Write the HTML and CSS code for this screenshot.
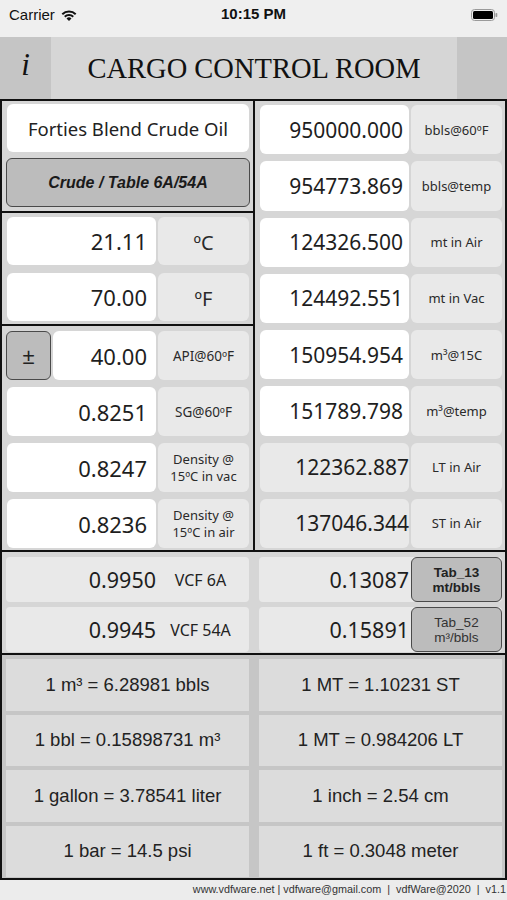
FILE: index.html
```html
<!DOCTYPE html>
<html lang="en">
<head>
  <meta charset="UTF-8">
  <meta name="viewport" content="width=device-width, initial-scale=1">
  <title>Cargo Control Room</title>
  <link rel="stylesheet" href="styles.css">
</head>
<body>
  <!-- iOS status bar -->
  <div class="status">
    <span class="carrier">Carrier
      <svg class="wifi" width="18" height="13" viewBox="0 0 18 13">
        <path d="M9 13 L6.53 10.53 A3.5 3.5 0 0 1 11.47 10.53 Z"/>
        <path d="M4.05 8.05 A7 7 0 0 1 13.95 8.05 L12.54 9.46 A5 5 0 0 0 5.46 9.46 Z"/>
        <path d="M1.58 5.58 A10.5 10.5 0 0 1 16.42 5.58 L15.01 6.99 A8.5 8.5 0 0 0 2.99 6.99 Z"/>
      </svg>
    </span>
    <span class="clock">10:15 PM</span>
    <svg class="battery" width="27" height="12" viewBox="0 0 27 12">
      <rect x="0.5" y="0.5" width="23" height="11" rx="3" fill="none" stroke="#9a9a9a"/>
      <rect x="2" y="2" width="20" height="8" rx="1.5" fill="#000"/>
      <rect x="24.5" y="4" width="1.8" height="4" rx="0.8" fill="#9a9a9a"/>
    </svg>
  </div>

  <header class="titlebar">
    <div class="info">i</div>
    <h1 class="title">CARGO CONTROL ROOM</h1>
    <div class="side"></div>
  </header>

  <main class="board">
    <section class="top">
      <div class="col-left">
        <div class="group group-oil">
          <div class="box name">Forties Blend Crude Oil</div>
          <button class="btn table-btn">Crude / Table 6A/54A</button>
        </div>

        <div class="group group-temp">
          <div class="row"><div class="box val">21.11</div><div class="label unit">ºC</div></div>
          <div class="row"><div class="box val">70.00</div><div class="label unit">ºF</div></div>
        </div>

        <div class="group group-dens">
          <div class="row">
            <div class="api">
              <button class="btn sign">±</button>
              <div class="box val">40.00</div>
            </div>
            <div class="label">API@60ºF</div>
          </div>
          <div class="row"><div class="box val">0.8251</div><div class="label">SG@60ºF</div></div>
          <div class="row"><div class="box val">0.8247</div><div class="label two">Density @<br>15ºC in vac</div></div>
          <div class="row"><div class="box val">0.8236</div><div class="label two">Density @<br>15ºC in air</div></div>
        </div>
      </div>

      <div class="col-right">
        <div class="row"><div class="box val">950000.000</div><div class="label small">bbls@60ºF</div></div>
        <div class="row"><div class="box val">954773.869</div><div class="label small">bbls@temp</div></div>
        <div class="row"><div class="box val">124326.500</div><div class="label small">mt in Air</div></div>
        <div class="row"><div class="box val">124492.551</div><div class="label small">mt in Vac</div></div>
        <div class="row"><div class="box val">150954.954</div><div class="label small">m³@15C</div></div>
        <div class="row"><div class="box val">151789.798</div><div class="label small">m³@temp</div></div>
        <div class="row"><div class="box val grey">122362.887</div><div class="label small">LT in Air</div></div>
        <div class="row"><div class="box val grey">137046.344</div><div class="label small">ST in Air</div></div>
      </div>
    </section>

    <section class="vcf">
      <div class="vcf-cell">
        <span class="vcf-val">0.9950</span><span class="vcf-name">VCF 6A</span>
      </div>
      <div class="vcf-right">
        <span class="vcf-val">0.13087</span>
        <button class="btn tab-btn bold">Tab_13<br>mt/bbls</button>
      </div>
      <div class="vcf-cell">
        <span class="vcf-val">0.9945</span><span class="vcf-name">VCF 54A</span>
      </div>
      <div class="vcf-right">
        <span class="vcf-val">0.15891</span>
        <button class="btn tab-btn">Tab_52<br>m³/bbls</button>
      </div>
    </section>

    <section class="conv">
      <div class="conv-cell">1 m³ = 6.28981 bbls</div>
      <div class="conv-cell">1 MT = 1.10231 ST</div>
      <div class="conv-cell">1 bbl = 0.15898731 m³</div>
      <div class="conv-cell">1 MT = 0.984206 LT</div>
      <div class="conv-cell">1 gallon = 3.78541 liter</div>
      <div class="conv-cell">1 inch = 2.54 cm</div>
      <div class="conv-cell">1 bar = 14.5 psi</div>
      <div class="conv-cell">1 ft = 0.3048 meter</div>
    </section>
  </main>

  <footer class="footer">www.vdfware.net | vdfware@gmail.com &nbsp;| &nbsp;vdfWare@2020 &nbsp;| &nbsp;v1.1</footer>
</body>
</html>
```

FILE: styles.css
```css
body {
  margin: 0;
  width: 507px;
  height: 900px;
  overflow: hidden;
  background-color: #ececec;
  color: #222;
  font-family: "Liberation Sans", Arial, sans-serif;
}

button {
  font-family: inherit;
  color: inherit;
  padding: 0;
  margin: 0;
}

/* status bar */
.status {
  height: 37px;
  background-color: #efefef;
  display: flex;
  align-items: center;
  justify-content: space-between;
  padding: 0 9px 8px 9px;
  box-sizing: border-box;
  position: relative;
  font-size: 15px;
  color: #111;
}

.carrier {
  display: flex;
  align-items: center;
  gap: 5px;
}

.wifi path {
  fill: #111;
}

.clock {
  position: absolute;
  left: 0;
  right: 0;
  text-align: center;
  font-weight: bold;
  top: 5px;
}

/* title bar */
.titlebar {
  height: 62px;
  display: flex;
  background-color: #d6d6d6;
}

.info {
  width: 51px;
  background-color: #c5c5c5;
  font-family: "Liberation Serif", serif;
  font-style: italic;
  font-size: 31px;
  display: flex;
  align-items: center;
  justify-content: center;
  padding-bottom: 6px;
  box-sizing: border-box;
  color: #111;
}

.title {
  flex: 1;
  margin: 0;
  font-family: "Liberation Serif", serif;
  font-weight: normal;
  font-size: 28.5px;
  text-align: center;
  line-height: 62px;
  padding-top: 1px;
  color: #111;
}

.side {
  width: 50px;
  background-color: #c5c5c5;
}

/* main board */
.board {
  border: 2px solid #111;
  background-color: #d6d6d6;
}

.top {
  display: flex;
  border-bottom: 2px solid #111;
}

.col-left {
  width: 253px;
  border-right: 2px solid #111;
  box-sizing: border-box;
}

.group {
  padding: 0 4px 0 5px;
  display: flex;
  flex-direction: column;
}

.group-oil {
  padding-top: 3px;
  padding-bottom: 4px;
  gap: 6px;
  border-bottom: 2px solid #111;
}

.group-temp {
  padding-top: 4px;
  padding-bottom: 3px;
  gap: 8px;
  border-bottom: 2px solid #111;
}

.group-temp .row {
  height: 48px;
}

.group-dens {
  padding-top: 5px;
  padding-bottom: 2px;
  gap: 7px;
}

.group-dens .row {
  height: 49px;
}

.col-right {
  flex: 1;
  padding: 4px 3px 2px 5px;
  display: flex;
  flex-direction: column;
  gap: 7px;
}

.col-right .row {
  flex: 1;
}

.row {
  display: grid;
  grid-template-columns: 149px 1fr;
  gap: 2px;
}

.box {
  background-color: #fff;
  border-radius: 6px;
  display: flex;
  align-items: center;
}

.name {
  height: 48px;
  justify-content: center;
  font-family: "Noto Sans", sans-serif;
  font-size: 18.5px;
  color: #222;
}

.val {
  justify-content: flex-end;
  padding-right: 9px;
  font-family: "Noto Sans", sans-serif;
  font-size: 22px;
  color: #1e1e1e;
}

.col-right .val {
  padding-right: 6px;
  font-size: 21px;
}

.col-right .val.grey {
  background-color: #e9e9e9;
  padding-right: 0;
}

.api {
  display: flex;
  gap: 2px;
}

.api .val {
  flex: 1;
}

.label {
  background-color: #e9e9e9;
  border-radius: 6px;
  display: flex;
  align-items: center;
  justify-content: center;
  text-align: center;
  font-family: "Noto Sans", sans-serif;
  font-size: 13.5px;
  color: #2a2a2a;
}

.label.unit {
  font-size: 20px;
  padding-top: 3px;
}

.label.two {
  font-size: 13px;
  line-height: 17px;
}

.label.small {
  font-size: 13px;
}

.btn {
  background-color: #bcbcbc;
  border: 1px solid #4a4a4a;
  border-radius: 6px;
  cursor: pointer;
}

.table-btn {
  height: 49px;
  margin: 0 -1px;
  font-size: 16px;
  font-weight: bold;
  font-style: italic;
  color: #1a1a1a;
}

.sign {
  width: 45px;
  margin-left: -1px;
  font-size: 22px;
  padding-top: 2px;
}

/* vcf rows */
.vcf {
  display: grid;
  grid-template-columns: 243px 1fr;
  grid-template-rows: 45px 45px;
  column-gap: 10px;
  row-gap: 5px;
  padding: 5px 3px 1px 4px;
  border-bottom: 2px solid #111;
}

.vcf-cell {
  background-color: #e9e9e9;
  border-radius: 4px;
  display: grid;
  grid-template-columns: 150px 1fr;
  gap: 2px;
  align-items: center;
}

.vcf-val {
  text-align: right;
  font-family: "Noto Sans", sans-serif;
  font-size: 21.5px;
  color: #1e1e1e;
}

.vcf-name {
  font-family: "Noto Sans", sans-serif;
  font-size: 16px;
  text-align: center;
  padding-right: 6px;
}

.vcf-right {
  background-color: #e9e9e9;
  border-radius: 4px;
  display: grid;
  grid-template-columns: 150px 1fr;
  gap: 2px;
  align-items: center;
}

.tab-btn {
  height: 45px;
  font-size: 13.5px;
  line-height: 15px;
  color: #333;
}

.tab-btn.bold {
  font-weight: bold;
  color: #222;
}

/* conversion table */
.conv {
  display: grid;
  grid-template-columns: 1fr 1fr;
  grid-template-rows: repeat(4, 1fr);
  height: 218px;
  column-gap: 10px;
  row-gap: 4px;
  padding: 4px 3px 1px 4px;
  background-color: #c6c6c6;
}

.conv-cell {
  background-color: #dcdcdc;
  display: flex;
  align-items: center;
  justify-content: center;
  font-size: 18.5px;
  color: #222;
}

.footer {
  height: 18px;
  line-height: 18px;
  text-align: right;
  padding-right: 1px;
  font-size: 10.8px;
  color: #333;
  background-color: #ececec;
}
```
